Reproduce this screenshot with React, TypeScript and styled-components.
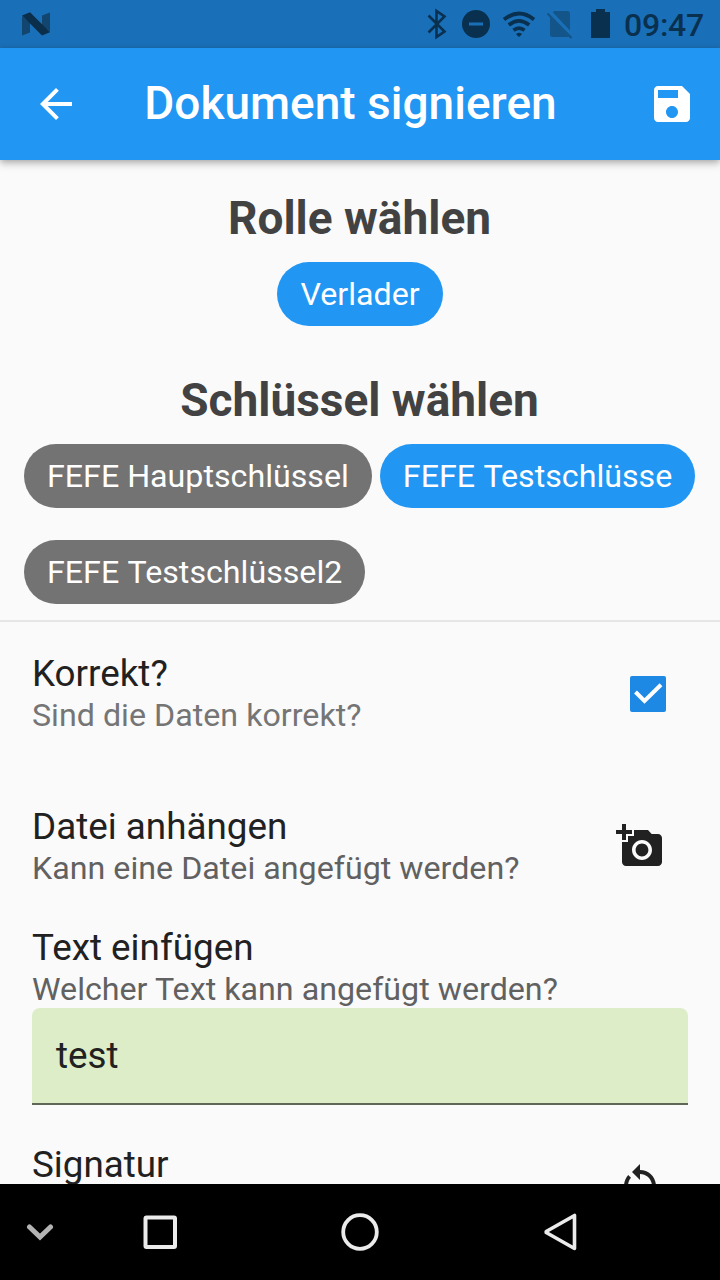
import React from 'react';
import styled, { createGlobalStyle } from 'styled-components';

const GlobalStyle = createGlobalStyle`
  * { box-sizing: border-box; }
  body { margin: 0; background: #fafafa; font-family: Roboto, sans-serif; }
`;

const Screen = styled.div`
  width: 720px;
  height: 1280px;
  display: flex;
  flex-direction: column;
  overflow: hidden;
  background: #fafafa;
  color: #212121;
`;

const StatusBar = styled.div`
  flex: none;
  height: 48px;
  display: flex;
  align-items: center;
  justify-content: space-between;
  padding: 0 16px 0 20px;
  background: #1a70b8;
  color: #0a304f;
`;

const StatusIcons = styled.div`
  display: flex;
  align-items: center;
`;

const Clock = styled.span`
  width: 80px;
  margin-left: 12px;
  font-size: 32px;
  font-weight: 500;
  line-height: 48px;
  padding-top: 1px;
  letter-spacing: -0.25px;
  white-space: nowrap;
`;

const AppBar = styled.header`
  flex: none;
  position: relative;
  z-index: 1;
  height: 112px;
  display: flex;
  align-items: center;
  padding: 0 24px 0 32px;
  background: #2196f3;
  color: #fff;
  box-shadow: 0 4px 8px rgba(0, 0, 0, 0.2), 0 1px 6px rgba(0, 0, 0, 0.18);
`;

const Title = styled.h1`
  flex: 1;
  margin: 0;
  padding: 0 27px 2px 0;
  text-align: center;
  font-size: 46px;
  font-weight: 500;
  line-height: 54px;
  white-space: nowrap;
`;

const Body = styled.main`
  flex: 1;
  min-height: 0;
  overflow: hidden;
`;

const Picker = styled.section<{ $height: number }>`
  height: ${(p) => p.$height}px;
  padding: 31px 24px 0;
`;

const Heading = styled.h2`
  margin: 0 0 17px;
  padding-right: 1px;
  text-align: center;
  font-size: 46px;
  font-weight: 700;
  line-height: 54px;
  color: #424242;
`;

const Chips = styled.div<{ $center?: boolean }>`
  display: flex;
  flex-wrap: wrap;
  justify-content: ${(p) => (p.$center ? 'center' : 'flex-start')};
  gap: 32px 8px;
`;

const Chip = styled.button<{ $selected?: boolean; $wordGap?: number }>`
  height: 64px;
  padding: 0 23px;
  border: 0;
  border-radius: 32px;
  background: ${(p) => (p.$selected ? '#2196f3' : '#737373')};
  color: #fff;
  font: 400 32.2px/64px Roboto, sans-serif;
  word-spacing: ${(p) => p.$wordGap ?? 0}px;
  white-space: nowrap;
`;

const Row = styled.section<{ $height: number; $top: number; $end: number }>`
  height: ${(p) => p.$height}px;
  padding: ${(p) => p.$top}px ${(p) => p.$end}px 0 32px;
  display: flex;
  justify-content: space-between;
`;

const CheckRow = styled(Row)`
  border-top: 2px solid #e6e6e6;
`;

const Label = styled.div`
  padding-top: 1px;
  font-size: 36.8px;
  line-height: 42px;
  color: #212121;
`;

const Hint = styled.div<{ $light?: boolean }>`
  font-size: 32.2px;
  line-height: 40px;
  word-spacing: 0.1px;
  color: ${(p) => (p.$light ? '#757575' : '#616161')};
`;

const Action = styled.div<{ $top: number }>`
  padding-top: ${(p) => p.$top}px;
`;

const Checkbox = styled.div`
  width: 36px;
  height: 36px;
  border-radius: 2px;
  background: #1e88e5;
`;

const Field = styled.div`
  height: 97px;
  margin: 0 32px;
  padding: 0 24px;
  border-bottom: 2px solid #5f6656;
  border-radius: 8px 8px 0 0;
  background: #dcedc8;
  font-size: 36.8px;
  line-height: 95px;
`;

const NavBar = styled.nav`
  flex: none;
  height: 96px;
  display: flex;
  align-items: center;
  background: #000;
`;

const NavCell = styled.div<{ $width: number }>`
  width: ${(p) => p.$width}px;
  display: flex;
  justify-content: center;
`;

const Icon = styled.svg`
  display: block;
  flex: none;
`;

const MaterialIcon = ({ d }: { d: string }) => (
  <Icon width="48" height="48" viewBox="0 0 24 24" fill="currentColor">
    <path d={d} />
  </Icon>
);

const BACK = 'M20 11H7.83l5.59-5.59L12 4l-8 8 8 8 1.41-1.41L7.83 13H20v-2z';
const SAVE =
  'M17 3H5c-1.11 0-2 .9-2 2v14c0 1.1.89 2 2 2h14c1.1 0 2-.9 2-2V7l-4-4zm-5 16c-1.66 0-3-1.34-3-3s1.34-3 3-3 3 1.34 3 3-1.34 3-3 3zm3-10H5V5h10v4z';
const ADD_PHOTO =
  'M3 4V1h2v3h3v2H5v3H3V6H0V4h3zm3 6V7h3V4h7l1.83 2H21c1.1 0 2 .9 2 2v12c0 1.1-.9 2-2 2H5c-1.1 0-2-.9-2-2V10h3zm7 9c2.76 0 5-2.24 5-5s-2.24-5-5-5-5 2.24-5 5 2.24 5 5 5zm-3.2-5c0 1.77 1.43 3.2 3.2 3.2s3.2-1.43 3.2-3.2-1.43-3.2-3.2-3.2-3.2 1.43-3.2 3.2z';
const ROTATE =
  'M12 4V1L8 5l4 4V6c3.31 0 6 2.69 6 6h2c0-4.42-3.58-8-8-8zM7.5 7.9L6.1 6.5C4.8 8 4 9.9 4 12h2c0-1.6.57-3 1.5-4.1z';

export default function App() {
  return (
    <>
      <GlobalStyle />
      <Screen>
        <StatusBar>
          <Icon width="32" height="28" viewBox="20 10 32 28">
            <path d="M22 16l8 7v9.500l-8 3zM50 32l-8-7v-9.500l8-3z" fill="#12466f" />
            <path d="M22 15.500l8-3.200L50 32.200l-8 3.300z" fill="#0b2e4a" />
          </Icon>
          <StatusIcons>
            <Icon width="188" height="48" viewBox="424 0 188 48">
              <path
                d="M428.500 15.500L444.500 31.500L436.500 37V11L444.500 16.500L428.500 32.500"
                fill="none"
                stroke="currentColor"
                strokeWidth="2.600"
              />
              <circle cx="476" cy="24" r="14" fill="currentColor" />
              <path d="M469 24h14" stroke="#1a70b8" strokeWidth="3" />
              <g fill="none" stroke="currentColor" strokeWidth="3.800">
                <path d="M504 19.500Q519 7.500 534 19.500" />
                <path d="M508.800 25Q519 16.800 529.200 25" />
                <path d="M513.500 30.200Q519 26 524.500 30.200" />
              </g>
              <path d="M516 34.200Q519 31.500 522 34.200L519 37z" fill="currentColor" />
              <path d="M554 11h13.500a2.500 2.500 0 0 1 2.500 2.500V37h-17.500a2.500 2.500 0 0 1-2.500-2.500V17z" fill="#145589" />
              <path d="M549 12l24 25.500" stroke="#1a70b8" strokeWidth="5" />
              <path d="M547.500 13.500l24 24.500" stroke="#145589" strokeWidth="2.300" />
              <path d="M596 9h9v3h5v26h-19V12h5z" fill="currentColor" />
            </Icon>
            <Clock>09:47</Clock>
          </StatusIcons>
        </StatusBar>
        <AppBar>
          <MaterialIcon d={BACK} />
          <Title>Dokument signieren</Title>
          <MaterialIcon d={SAVE} />
        </AppBar>
        <Body>
          <Picker $height={182}>
            <Heading>Rolle wählen</Heading>
            <Chips $center>
              <Chip $selected>Verlader</Chip>
            </Chips>
          </Picker>
          <Picker $height={278}>
            <Heading>Schlüssel wählen</Heading>
            <Chips>
              <Chip>FEFE Hauptschlüssel</Chip>
              <Chip $selected $wordGap={1}>FEFE Testschlüsse</Chip>
              <Chip $wordGap={1}>FEFE Testschlüssel2</Chip>
            </Chips>
          </Picker>
          <CheckRow $height={176} $top={30} $end={54}>
            <div>
              <Label>Korrekt?</Label>
              <Hint $light>Sind die Daten korrekt?</Hint>
            </div>
            <Action $top={24}>
              <Checkbox>
                <Icon width="36" height="36" viewBox="0 0 36 36">
                  <path d="M5.500 16L14.500 25L31 8.800" fill="none" stroke="#fff" strokeWidth="4" />
                </Icon>
              </Checkbox>
            </Action>
          </CheckRow>
          <Row $height={121} $top={9} $end={56}>
            <div>
              <Label>Datei anhängen</Label>
              <Hint>Kann eine Datei angefügt werden?</Hint>
            </div>
            <Action $top={17}>
              <MaterialIcon d={ADD_PHOTO} />
            </Action>
          </Row>
          <Row $height={91} $top={9} $end={32}>
            <div>
              <Label>Text einfügen</Label>
              <Hint>Welcher Text kann angefügt werden?</Hint>
            </div>
          </Row>
          <Field>test</Field>
          <Row $height={120} $top={38} $end={56}>
            <Label>Signatur</Label>
            <Action $top={19}>
              <MaterialIcon d={ROTATE} />
            </Action>
          </Row>
        </Body>
        <NavBar>
          <NavCell $width={80}>
            <Icon width="28" height="20" viewBox="0 0 28 20">
              <path d="M3.500 5l10.500 10L24.500 5" fill="none" stroke="#b3b3b3" strokeWidth="5" strokeLinecap="round" />
            </Icon>
          </NavCell>
          <NavCell $width={160}>
            <Icon width="40" height="40" viewBox="0 0 40 40">
              <rect x="5.500" y="5.500" width="29.500" height="29.500" rx="1" fill="none" stroke="#ebebeb" strokeWidth="4" />
            </Icon>
          </NavCell>
          <NavCell $width={240}>
            <Icon width="40" height="40" viewBox="0 0 40 40">
              <circle cx="20" cy="20" r="16.800" fill="none" stroke="#ebebeb" strokeWidth="3.800" />
            </Icon>
          </NavCell>
          <NavCell $width={160}>
            <Icon width="40" height="40" viewBox="0 0 40 40">
              <path
                d="M34.500 3.500V36.500L6.200 20.500V19.500z"
                fill="none"
                stroke="#ebebeb"
                strokeWidth="3.600"
                strokeLinejoin="round"
              />
            </Icon>
          </NavCell>
        </NavBar>
      </Screen>
    </>
  );
}
